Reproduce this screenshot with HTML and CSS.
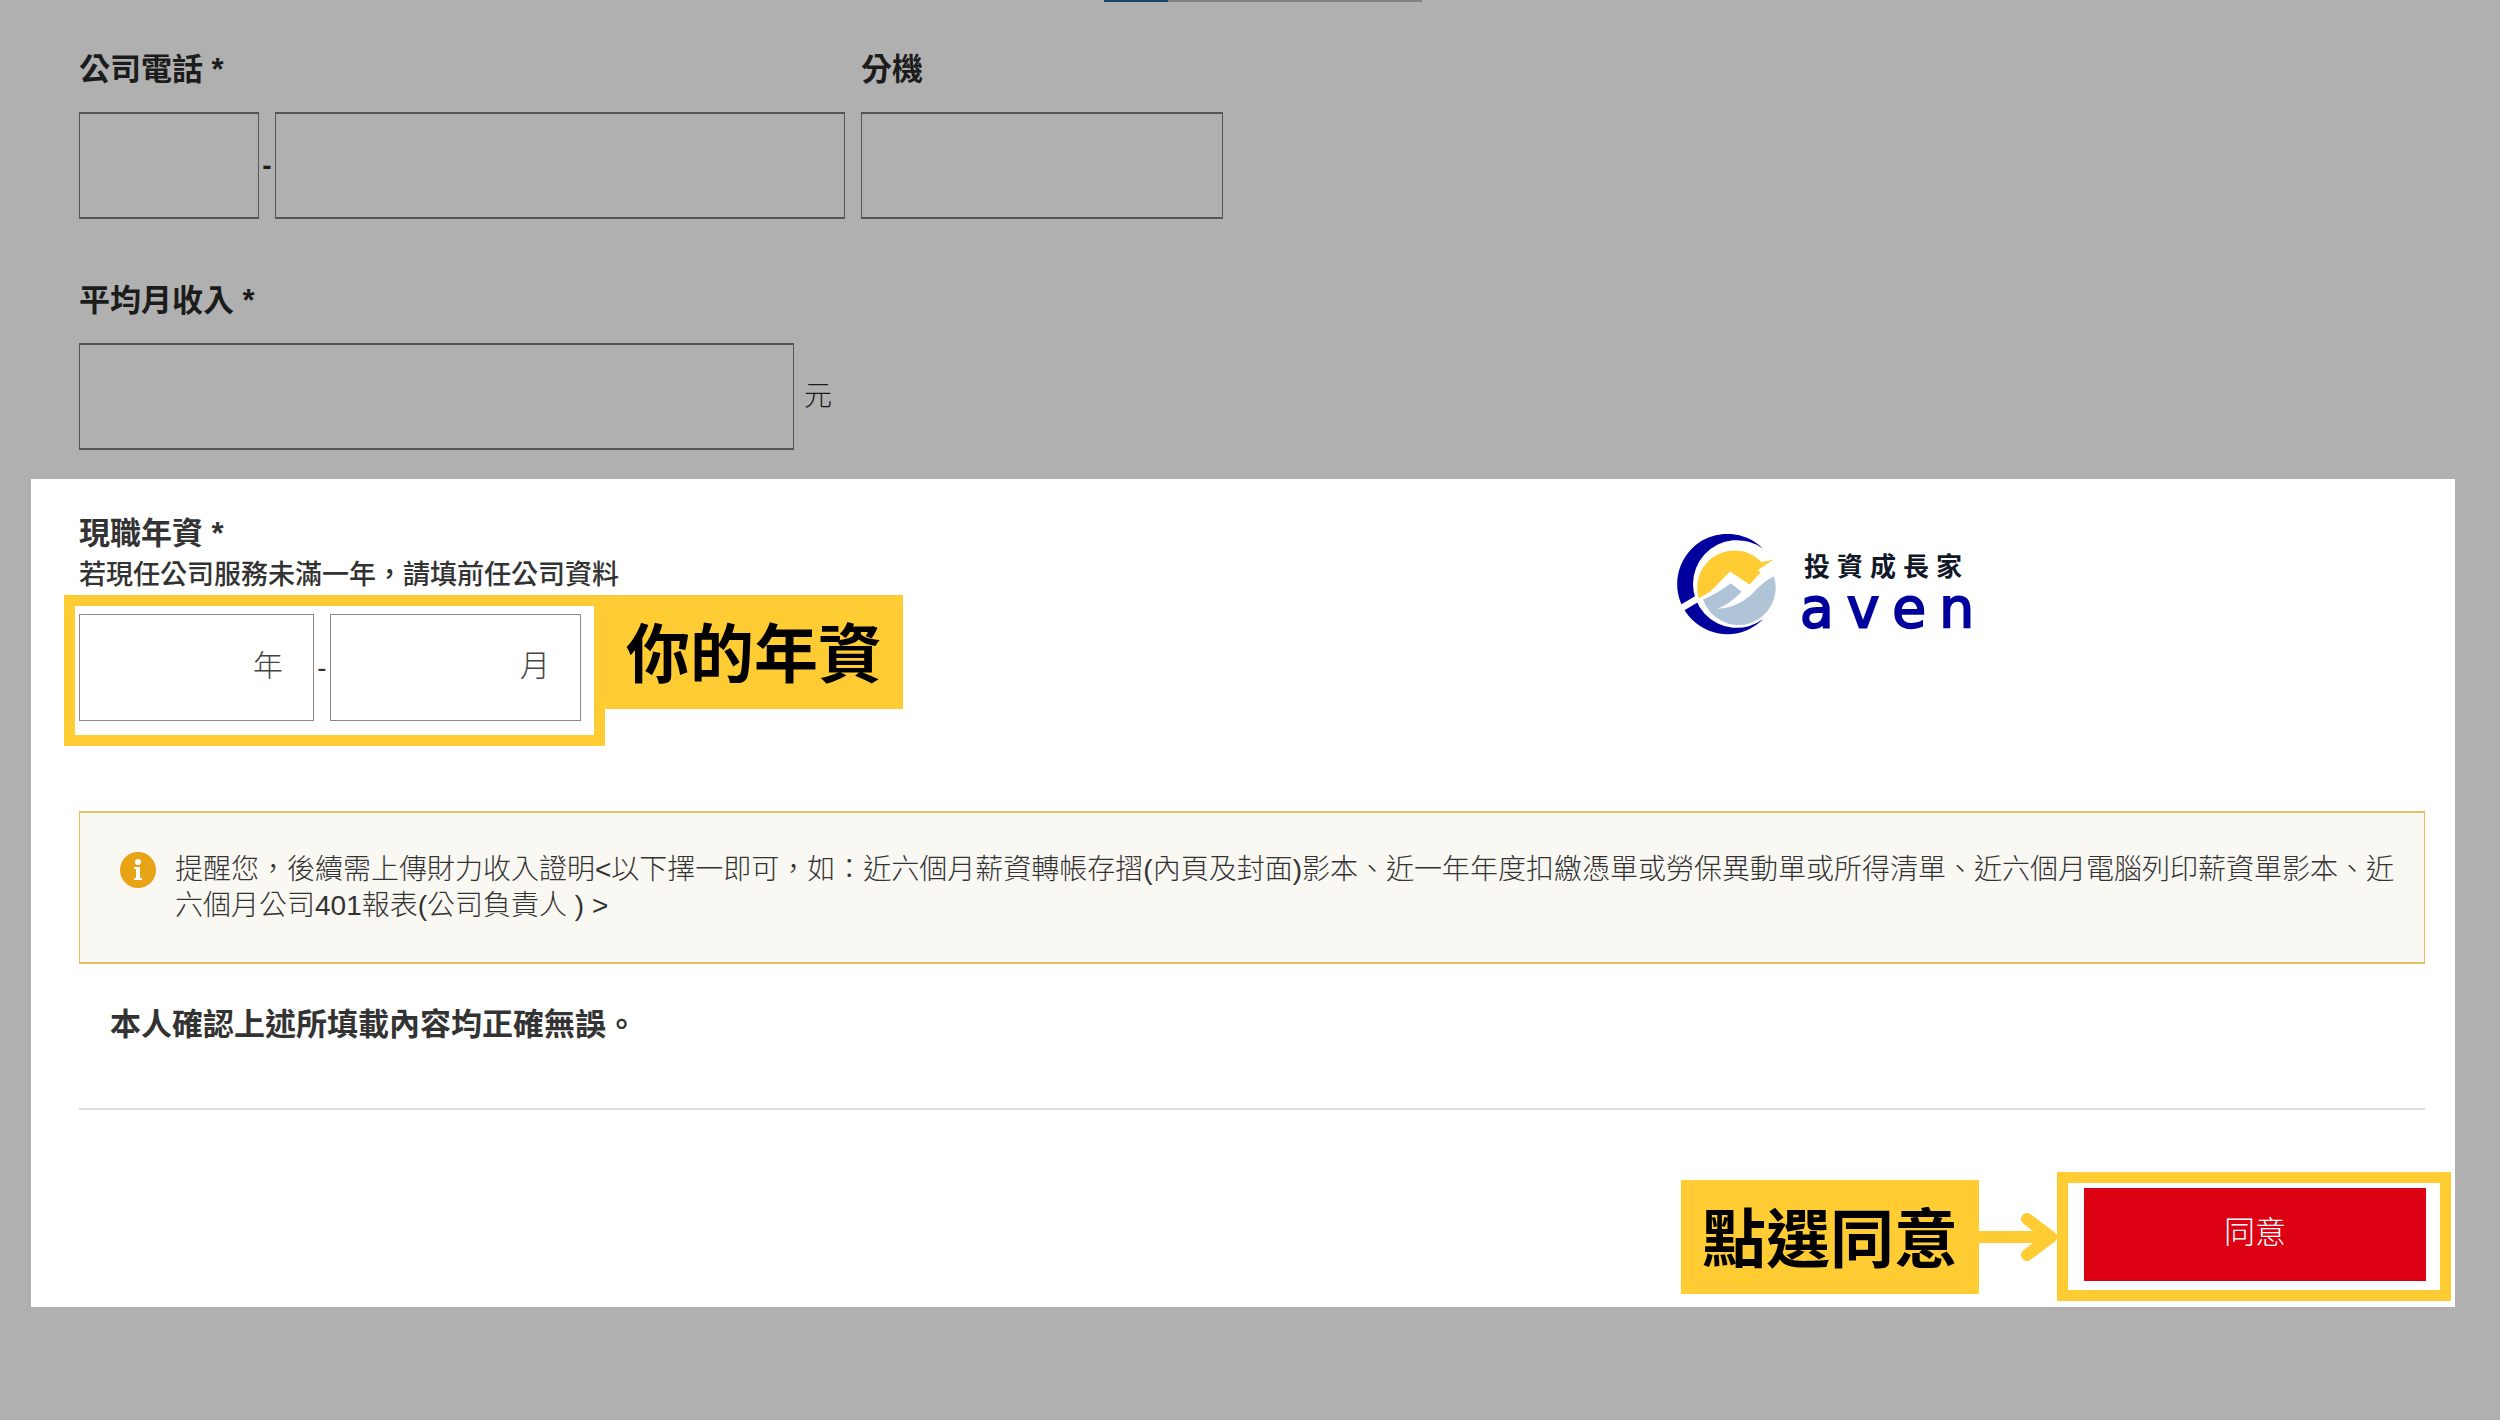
FILE: index.html
```html
<!DOCTYPE html>
<html lang="zh-Hant">
<head>
<meta charset="utf-8">
<meta name="viewport" content="width=device-width, initial-scale=1">
<title>現職資料</title>
<link rel="stylesheet" href="styles.css">
</head>
<body>
<header class="progress"><div class="progress-track"><div class="progress-done"></div></div></header>
<form class="form">
  <section class="dimmed">
    <div class="row phone-row">
      <div class="field phone">
        <label class="label" for="area">公司電話 *</label>
        <div class="controls">
          <input class="box area" id="area" type="text">
          <span class="dash strong">-</span>
          <input class="box number" id="number" type="text" aria-label="公司電話號碼">
        </div>
      </div>
      <div class="field extension">
        <label class="label" for="ext">分機</label>
        <input class="box" id="ext" type="text">
      </div>
    </div>
    <div class="field">
      <label class="label" for="income">平均月收入 *</label>
      <div class="controls">
        <input class="box income" id="income" type="text">
        <span class="unit">元</span>
      </div>
    </div>
  </section>

  <section class="panel">
    <div class="panel-head">
      <div class="tenure">
        <label class="label" for="years">現職年資 *</label>
        <p class="hint">若現任公司服務未滿一年，請填前任公司資料</p>
        <div class="marked">
          <div class="frame tenure-frame">
            <input class="box years" id="years" type="text" placeholder="年">
            <span class="dash">-</span>
            <input class="box months" id="months" type="text" placeholder="月" aria-label="月">
          </div>
          <strong class="callout">你的年資</strong>
        </div>
      </div>
      <div class="brand">
        <svg class="brand-mark" viewBox="20 28 300 304" aria-hidden="true">
          <path fill="#00009c" d="M282 73A151 151 0 1 0 282 284A132 132 0 1 1 282 73Z"/>
          <path fill="none" stroke="#fff" stroke-width="20" d="M18 262L98 214"/>
          <path fill="#ffcc33" d="M88 222A112 112 0 0 1 276 112Q296 110 313 105L265 137L274 144L241 180L182 141L124 200Q104 212 88 222Z"/>
          <path fill="#b0c4d8" d="M101 225Q146 206 184 176L217 202Q178 242 144 253Q212 250 262 194Q290 166 314 155A112 112 0 0 1 101 225Z"/>
        </svg>
        <div class="brand-text">
          <span class="brand-name">投資成長家</span>
          <span class="brand-word">aven</span>
        </div>
      </div>
    </div>

    <div class="notice">
      <svg class="notice-icon" viewBox="0 0 36 36" aria-hidden="true">
        <circle cx="18" cy="18" r="18" fill="#e8a317"/>
        <circle cx="18" cy="10" r="3" fill="#fff"/>
        <path fill="#fff" d="M14 15h6v11h2v2h-8v-2h2v-9h-2z"/>
      </svg>
      <p class="notice-text">提醒您，後續需上傳財力收入證明&lt;以下擇一即可，如：近六個月薪資轉帳存摺(內頁及封面)影本、近一年年度扣繳憑單或勞保異動單或所得清單、近六個月電腦列印薪資單影本、近六個月公司401報表(公司負責人 ) &gt;</p>
    </div>
    <p class="confirm">本人確認上述所填載內容均正確無誤。</p>
    <hr class="rule">
    <div class="actions">
      <strong class="callout">點選同意</strong>
      <svg class="arrow" viewBox="0 0 78 50" aria-hidden="true">
        <path d="M0 25H70M48 7L72 25L48 43" fill="none" stroke="#ffcc33" stroke-width="12" stroke-linecap="round" stroke-linejoin="round"/>
      </svg>
      <div class="frame agree-frame"><button class="agree" type="button">同意</button></div>
    </div>
  </section>
</form>
</body>
</html>
```
FILE: styles.css
```css
* { box-sizing: border-box; }

body {
  margin: 0;
  min-height: 100vh;
  background: #b0b0b0;
  color: #333;
  font-family: "Liberation Sans", "Noto Sans CJK TC", sans-serif;
  font-size: 28px;
  line-height: 36px;
}

p { margin: 0; }

input, button { font: inherit; }

.progress {
  display: flex;
  justify-content: center;
  padding-left: 26px;
}
.progress-track { width: 318px; height: 2px; background: #828282; }
.progress-done { width: 20%; height: 2px; background: #174469; }

.dimmed {
  display: flex;
  flex-direction: column;
  gap: 60px;
  padding: 46px 75px 29px 79px;
  color: #1c1c1c;
}
.row { display: flex; gap: 16px; }
.field { display: flex; flex-direction: column; gap: 22px; }
.phone { flex: 0 1 766px; }
.extension { flex: 0 1 362px; }
.controls { display: flex; align-items: center; }

.label {
  display: block;
  padding-top: 2px;
  font-size: 31px;
  font-weight: 700;
  line-height: 40px;
}

.box {
  width: 100%;
  min-width: 0;
  height: 107px;
  padding: 0 30px 4px;
  border: 2px solid #555;
  border-width: 2px 1px;
  border-radius: 0;
  background: transparent;
  color: inherit;
}
.area { flex: 0 1 180px; }
.number { flex: 1; }
.income { flex: 0 1 715px; }
.dash { flex: 0 0 16px; text-align: center; }
.strong { font-weight: 700; }
.unit { padding-left: 10px; font-weight: 300; }

.panel {
  margin: 0 45px 0 31px;
  padding: 33px 30px 6px 48px;
  background: #fff;
}
.panel-head {
  display: flex;
  justify-content: space-between;
  align-items: flex-start;
}
.hint {
  padding: 3px 0 2px;
  font-size: 27px;
  font-weight: 500;
}
.marked {
  display: flex;
  align-items: flex-start;
  margin-left: -15px;
}
.frame { border: 11px solid #ffcc33; background: #fff; }
.tenure-frame {
  display: flex;
  align-items: center;
  padding: 8px 13px 14px 4px;
}
.tenure-frame .box {
  border: 1px solid #888;
  font-size: 30px;
  font-weight: 300;
  text-align: right;
}
.box::placeholder { color: #444; opacity: 1; }
.tenure-frame .years { width: 235px; }
.tenure-frame .months { width: 251px; }

.callout {
  padding: 6px 21px 0;
  background: #ffcc33;
  color: #000;
  font-size: 64px;
  font-weight: 700;
  line-height: 108px;
  white-space: nowrap;
}

.brand {
  display: flex;
  align-items: center;
  gap: 24px;
  margin: 22px 438px 0 0;
}
.brand-mark { width: 100px; height: 101px; }
.brand-text {
  display: flex;
  flex-direction: column;
  padding-top: 10px;
}
.brand-name {
  padding-left: 4px;
  color: #111827;
  font-size: 26px;
  font-weight: 700;
  letter-spacing: 7px;
}
.brand-word {
  color: #00009c;
  font-family: "DejaVu Sans", sans-serif;
  font-size: 55px;
  line-height: 46px;
  letter-spacing: 13px;
  -webkit-text-stroke: 2px #00009c;
}

.notice {
  display: flex;
  gap: 19px;
  margin-top: 65px;
  padding: 39px 28px 38px 40px;
  border: 2px solid #e3bf68;
  border-width: 2px 1px;
  background: #faf8f3;
}
.notice-icon { flex: 0 0 36px; height: 36px; }
.notice-text { font-weight: 300; }

.confirm {
  padding: 41px 31px 63px;
  font-size: 31px;
  font-weight: 700;
  line-height: 40px;
}
.rule { height: 2px; margin: 0; border: 0; background: #ddd; }

.actions {
  display: flex;
  justify-content: flex-end;
  align-items: center;
  margin: 62px -26px 0 0;
}
.arrow { width: 78px; height: 50px; }
.agree-frame { padding: 5px 14px 9px 16px; }
.agree {
  display: block;
  width: 342px;
  height: 93px;
  padding: 0 0 4px;
  border: 0;
  background: #dc0012;
  color: #fff;
  font-size: 31px;
  font-weight: 300;
}
```
